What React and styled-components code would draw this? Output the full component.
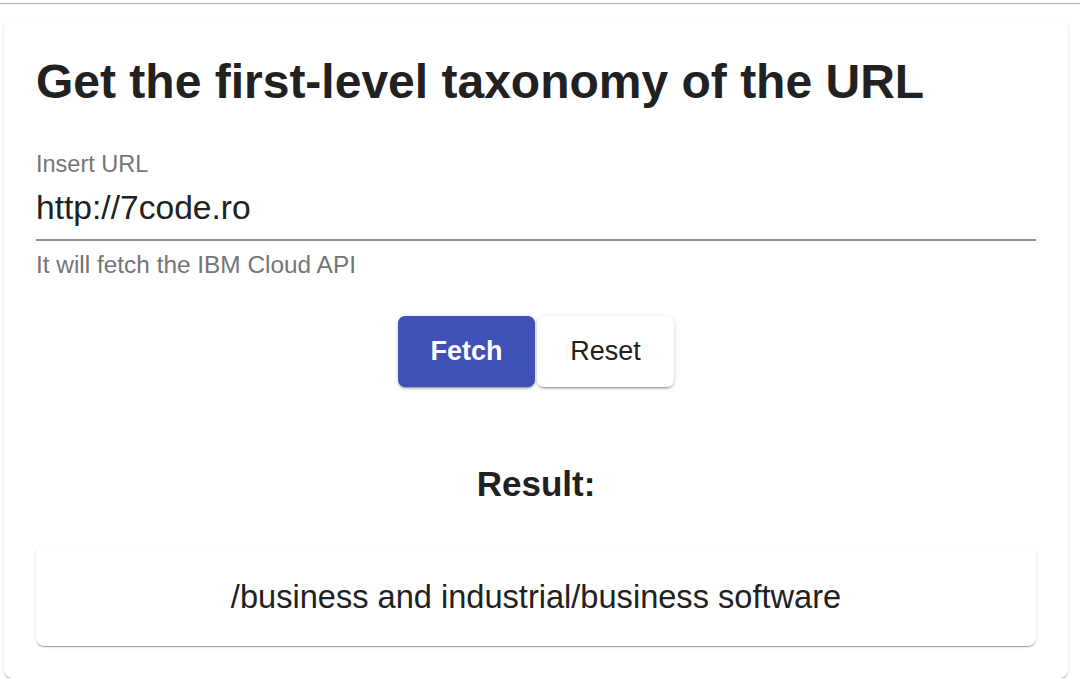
import React from "react";
import styled, { createGlobalStyle } from "styled-components";

const Global = createGlobalStyle`
  html, body { margin: 0; padding: 0; background: #ffffff; }
  body { font-family: "Liberation Sans", Arial, Helvetica, sans-serif; color: #212121; }
`;

const TopRule = styled.div`
  height: 3px;
  border-bottom: 1px solid #b3b3b3;
`;

const Page = styled.main`
  padding: 16px 12px 0 4px;
`;

const Card = styled.section`
  background: #fff;
  border-radius: 8px;
  box-shadow: 0px 2px 1px -1px rgba(0,0,0,0.2), 0px 1px 1px 0px rgba(0,0,0,0.14), 0px 1px 3px 0px rgba(0,0,0,0.12);
  padding: 26px 32px 32px;
  display: flex;
  flex-direction: column;
`;

const Title = styled.h1`
  margin: 0;
  font-size: 48px;
  line-height: 72px;
  font-weight: 700;
  color: #212121;
`;

const Field = styled.div`
  margin-top: 32px;
  display: flex;
  flex-direction: column;
`;

const Label = styled.label`
  font-size: 23.5px;
  line-height: 28px;
  color: #757575;
`;

const Input = styled.input`
  border: none;
  border-bottom: 2px solid #8f8f8f;
  outline: none;
  padding: 0 0 10px;
  margin-top: 9px;
  font-family: inherit;
  font-size: 33.6px;
  line-height: 42px;
  height: 42px;
  color: #212121;
  background: transparent;
`;

const Helper = styled.p`
  margin: 10px 0 0;
  font-size: 24.4px;
  line-height: 28px;
  color: #757575;
`;

const Actions = styled.div`
  margin-top: 37px;
  display: flex;
  justify-content: center;
  gap: 2px;
`;

const Button = styled.button`
  width: 137px;
  height: 71px;
  border: none;
  border-radius: 7px;
  font-family: inherit;
  font-size: 27px;
  font-weight: ${(p) => (p.$primary ? 700 : 400)};
  color: ${(p) => (p.$primary ? "#ffffff" : "#212121")};
  background: ${(p) => (p.$primary ? "#3f51b5" : "#ffffff")};
  box-shadow: 0px 3px 1px -2px rgba(0,0,0,0.2), 0px 2px 2px 0px rgba(0,0,0,0.14), 0px 1px 5px 0px rgba(0,0,0,0.12);
  cursor: pointer;
`;

const ResultHeading = styled.h2`
  margin: 76px 0 0;
  text-align: center;
  font-size: 35px;
  line-height: 42px;
  font-weight: 700;
  color: #212121;
`;

const ResultBox = styled.div`
  margin-top: 41px;
  height: 100px;
  border-radius: 8px;
  background: #fff;
  box-shadow: 0px 2px 1px -1px rgba(0,0,0,0.2), 0px 1px 1px 0px rgba(0,0,0,0.14), 0px 1px 3px 0px rgba(0,0,0,0.12);
  display: flex;
  align-items: center;
  justify-content: center;
  font-size: 32.6px;
  padding-top: 2px;
  box-sizing: border-box;
  color: #212121;
`;

export default function App() {
  return (
    <>
      <Global />
      <TopRule />
      <Page>
        <Card>
          <Title>Get the first-level taxonomy of the URL</Title>
          <Field>
            <Label htmlFor="url">Insert URL</Label>
            <Input id="url" defaultValue="http://7code.ro" />
            <Helper>It will fetch the IBM Cloud API</Helper>
          </Field>
          <Actions>
            <Button $primary>Fetch</Button>
            <Button>Reset</Button>
          </Actions>
          <ResultHeading>Result:</ResultHeading>
          <ResultBox>/business and industrial/business software</ResultBox>
        </Card>
      </Page>
    </>
  );
}
